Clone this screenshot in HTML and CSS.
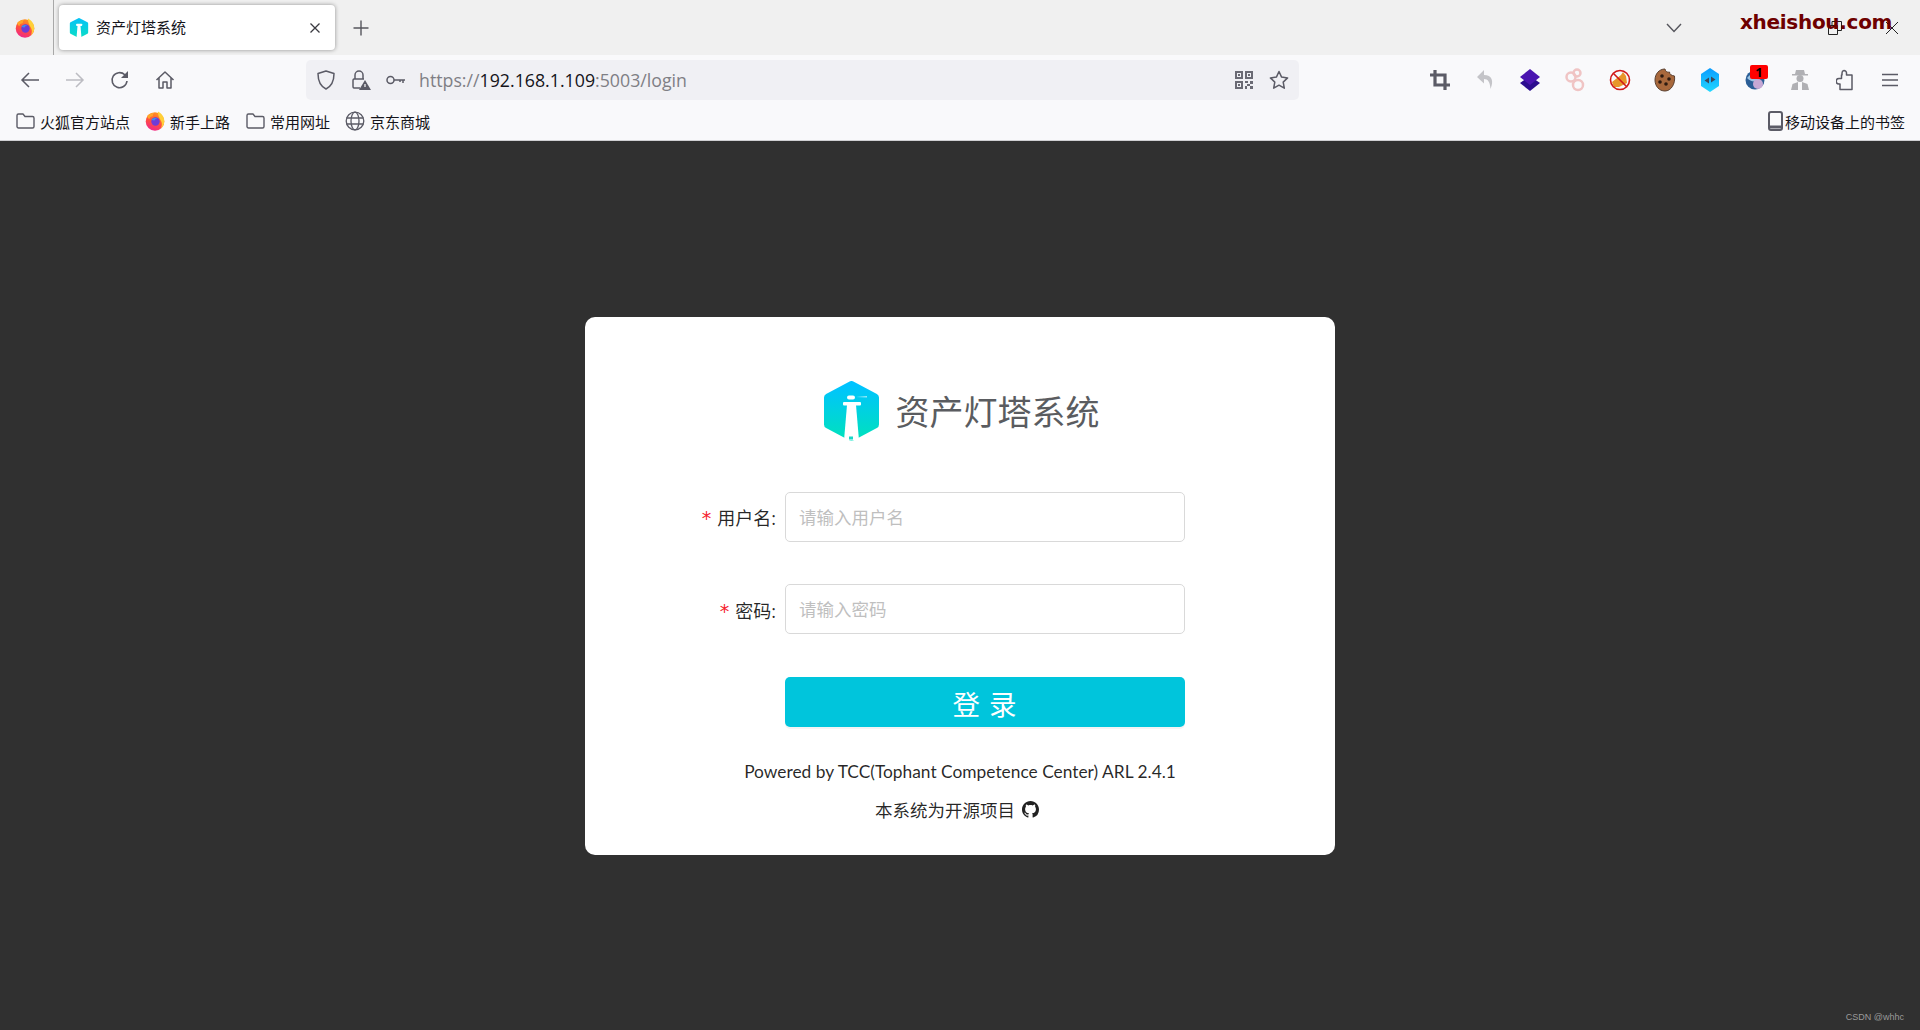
FILE: index.html
```html
<!DOCTYPE html>
<html lang="zh-CN">
<head>
    <meta charset="UTF-8">
    <title>资产灯塔系统</title>
    <link rel="stylesheet" href="styles.css">
</head>
<body>
    <div class="tabbar">
        <div class="tabbar-logo">
            <svg width="20" height="20" viewBox="0 0 20 20"><defs><linearGradient id="fx1" x1="0.7" y1="0" x2="0.3" y2="1"><stop offset="0" stop-color="#ff9a1f"/><stop offset="0.55" stop-color="#ff4f3e"/><stop offset="1" stop-color="#f0248f"/></linearGradient></defs><circle cx="10" cy="10.500" r="9.300" fill="url(#fx1)"/><path d="M13 .5c3 1.500 6.500 5 6.300 10-.1 3-1.500 5.500-3.500 7 1.500-3 1.500-6-.3-8.500C14.500 7 13 5 13 .5z" fill="#ffcf38"/><path d="M2 5c2-2.500 5-3.500 7-3-1 1-1.500 2-1 3-2 .5-3.500 1-3.500 3-1 0-2-1.500-2.500-3z" fill="#ffa52a"/><circle cx="10.500" cy="10.500" r="4.200" fill="#6f3bd6"/><path d="M6.500 8.500c2-2 4.500-2 6.500-.5-2-.5-3 .5-3.500 1.500-1 0-2-.2-3-1z" fill="#3a8df0"/></svg>
        </div>
        <div class="tab">
            <svg class="tab-icon" width="20" height="20" viewBox="0 0 55 60"><defs><linearGradient id="hex1" x1="0" y1="0" x2="0" y2="1"><stop offset="0" stop-color="#06c4f5"/><stop offset="1" stop-color="#0bdcc8"/></linearGradient></defs><path d="M27.500 4 51 16.500v27L27.500 56 4 43.500v-27z" fill="url(#hex1)" stroke="url(#hex1)" stroke-width="8" stroke-linejoin="round"/><path d="M23 24h9l3 36H20z" fill="#fff"/><rect x="19" y="17" width="18" height="7" rx="2" fill="#fff"/></svg>
            <span class="tab-title">资产灯塔系统</span>
            <svg class="tab-close" width="12" height="12" viewBox="0 0 12 12"><path d="M1.500 1.500l9 9M10.500 1.500l-9 9" stroke="#3a3a40" stroke-width="1.300"/></svg>
        </div>
        <svg class="tab-new" width="16" height="16" viewBox="0 0 16 16"><path d="M8 .5v15M.5 8h15" stroke="#55555c" stroke-width="1.400"/></svg>
        <svg class="tab-list" width="16" height="10" viewBox="0 0 16 10"><path d="M1 1l7 7.500L15 1" fill="none" stroke="#55555c" stroke-width="1.400"/></svg>
        <div class="winbtns">
            <svg width="14" height="14" viewBox="0 0 14 14"><path d="M1 7h12" stroke="#222" stroke-width="1"/></svg>
            <svg width="14" height="14" viewBox="0 0 14 14"><path d="M.5 4.500h9v9h-9zM4 4.500V.5h9.500v9H9.500" fill="none" stroke="#222"/></svg>
            <svg width="14" height="14" viewBox="0 0 14 14"><path d="M1 1l12 12M13 1L1 13" stroke="#222" stroke-width="1"/></svg>
        </div>
        <div class="watermark">xheishou.com</div>
    </div>

    <div class="toolbar">
        <div class="tool"><svg width="20" height="18" viewBox="0 0 20 18"><path d="M19 9H2M9 2 2 9l7 7" fill="none" stroke="#5b5b66" stroke-width="1.500"/></svg></div>
        <div class="tool"><svg width="20" height="18" viewBox="0 0 20 18"><path d="M1 9h17M11 2l7 7-7 7" fill="none" stroke="#bcbcc2" stroke-width="1.500"/></svg></div>
        <div class="tool"><svg width="20" height="20" viewBox="0 0 20 20"><path d="M17 11a7.500 7.500 0 1 1-2.200-6.200L17 7" fill="none" stroke="#5b5b66" stroke-width="1.600"/><path d="M18 1v7h-7z" fill="#5b5b66"/></svg></div>
        <div class="tool"><svg width="20" height="20" viewBox="0 0 20 20"><path d="M1.500 10 10 2l8.500 8M4 8v10h4v-6h4v6h4V8" fill="none" stroke="#5b5b66" stroke-width="1.500" stroke-linejoin="round"/></svg></div>

        <div class="urlbar">
            <svg class="url-shield" width="18" height="20" viewBox="0 0 18 20"><path d="M9 1 1 3.500c0 8 2 12.500 8 15.500 6-3 8-7.500 8-15.500z" fill="none" stroke="#5b5b66" stroke-width="1.500" stroke-linejoin="round"/></svg>
            <svg class="url-lock" width="20" height="20" viewBox="0 0 20 20"><path d="M4 9V5a4 4 0 0 1 8 0v4M9 18H3a1.500 1.500 0 0 1-1-1.500v-6A1.500 1.500 0 0 1 3 9h10" fill="none" stroke="#5b5b66" stroke-width="1.500"/><path d="M14 10l6 10H8z" fill="#5b5b66"/><path d="M14 14v3" stroke="#fff" stroke-width="1.200"/></svg>
            <svg class="url-key" width="20" height="10" viewBox="0 0 20 10"><circle cx="4.500" cy="5" r="3.500" fill="none" stroke="#5b5b66" stroke-width="1.500"/><path d="M8 5h11M17 5v3M14 5v2" fill="none" stroke="#5b5b66" stroke-width="1.500"/></svg>
            <span class="url-text">https://<b>192.168.1.109</b>:5003/login</span>
            <svg class="url-qr" width="18" height="18" viewBox="0 0 18 18" fill="#6a6a74"><path d="M0 0h8v8H0zm2 2v4h4V2zM10 0h8v8h-8zm2 2v4h4V2zM0 10h8v8H0zm2 2v4h4v-4zM3 3h2v2H3zM13 3h2v2h-2zM3 13h2v2H3zM10 10h3v2h-3zM15 10h3v3h-3zM12 13h3v2h-3zM10 15h2v3h-2zM15 15h3v3h-3z"/></svg>
            <svg class="url-star" width="20" height="20" viewBox="0 0 20 20"><path d="M10 1.500l2.600 5.600 6 .8-4.400 4.200 1.100 6.100L10 15.200l-5.300 3 1.100-6.100L1.400 7.900l6-.8z" fill="none" stroke="#5b5b66" stroke-width="1.500" stroke-linejoin="round"/></svg>
        </div>

        <div class="addons">
            <div class="tool"><svg width="20" height="20" viewBox="0 0 20 20"><path d="M5 0v15h15M0 5h15v15" fill="none" stroke="#5b5b66" stroke-width="3.200"/></svg></div>
            <div class="tool"><svg width="18" height="22" viewBox="0 0 18 22"><path d="M8 1 1 8l7 6.500V10c4 0 6 3 6.500 10C18 12 16 6 8 6z" fill="#c4c4c8"/></svg></div>
            <div class="tool"><svg width="20" height="22" viewBox="0 0 20 22"><path d="M10 7 20 14l-10 8L0 14z" fill="#2c0d8f"/><path d="M10 0 20 8l-10 8L0 8z" fill="#4a14b0"/></svg></div>
            <div class="tool"><svg width="20" height="24" viewBox="0 0 20 24" fill="none" stroke="#f0c4c4" stroke-width="2.500"><circle cx="6" cy="9" r="4.500"/><circle cx="12" cy="5" r="3.500"/><circle cx="13" cy="17" r="5"/></svg></div>
            <div class="tool"><svg width="22" height="22" viewBox="0 0 22 22"><path d="M3 13l9-7 2-3 3 4 1 7-8 4H5z" fill="#e8962a"/><circle cx="11" cy="11" r="9.500" fill="none" stroke="#d01818" stroke-width="1.600"/><path d="M4.500 4.500l13 13" stroke="#d01818" stroke-width="1.600"/></svg></div>
            <div class="tool"><svg width="22" height="24" viewBox="0 0 22 24"><path d="M11 1c.5 3 3 3.500 4.500 3 0 2.500 2 3.500 5 4 1 8-3.500 15-9.500 15C5 23 1 18 1 12S5 1 11 1z" fill="#a8683c" stroke="#5a4030" stroke-width="1"/><g fill="#2d1a10"><circle cx="8" cy="8" r="1.800"/><circle cx="15" cy="11" r="1.800"/><circle cx="6" cy="14" r="1.800"/><circle cx="12" cy="16" r="1.800"/></g></svg></div>
            <div class="tool"><svg width="18" height="24" viewBox="0 0 18 24"><defs><linearGradient id="hexa" x1="0" y1="0" x2="0" y2="1"><stop offset="0" stop-color="#0a9cff"/><stop offset="1" stop-color="#22d8ff"/></linearGradient></defs><path d="M9 0l9 6v12l-9 6-9-6V6z" fill="url(#hexa)"/><path d="M3.500 12.500l4.500-3v6zM14.500 11.500l-4.500-3v6z" fill="#3c4a5c"/></svg></div>
            <div class="tool tool-badged">
                <svg width="20" height="22" viewBox="0 0 20 22"><circle cx="10" cy="11" r="9.500" fill="#2b5e96"/><path d="M2 9c3-4 8-6 13-5l-3 8c-4 1-7 0-10-3z" fill="#9cc4e4"/><circle cx="13" cy="15" r="5" fill="#c6a8d4"/></svg>
                <span class="badge">1</span>
            </div>
            <div class="tool"><svg width="20" height="22" viewBox="0 0 20 22" fill="#b0b0b4"><path d="M6 1h8l1 4h3v1.500H2V5h3z"/><circle cx="10" cy="9.500" r="3.500"/><path d="M1 21l1.500-6L8 13v8zM19 21l-1.500-6L12 13v8z"/></svg></div>
            <div class="tool"><svg width="18" height="22" viewBox="0 0 18 22"><path d="M8 1.500a2.500 2.500 0 0 1 2.500 2.500v2h5.500v14.500H4V15H3a2.800 2.800 0 0 1 0-5.600h2.500V6h.500V4A2.500 2.500 0 0 1 8 1.500z" fill="none" stroke="#5b5b66" stroke-width="1.500" stroke-linejoin="round"/></svg></div>
            <div class="tool"><svg width="16" height="14" viewBox="0 0 16 14"><path d="M0 1.500h16M0 7h16M0 12.500h16" stroke="#5b5b66" stroke-width="1.500"/></svg></div>
        </div>
    </div>

    <div class="bookmarks">
        <div class="bookmark">
            <svg width="19" height="16" viewBox="0 0 19 16"><path d="M1 13.500V2.500A1.500 1.500 0 0 1 2.500 1H7l2 2.500h7.500A1.500 1.500 0 0 1 18 5v8.500a1.500 1.500 0 0 1-1.500 1.500h-14A1.500 1.500 0 0 1 1 13.500z" fill="none" stroke="#5b5b66" stroke-width="1.400" stroke-linejoin="round"/></svg>
            <span>火狐官方站点</span>
        </div>
        <div class="bookmark">
            <svg width="20" height="20" viewBox="0 0 20 20"><defs><linearGradient id="fx2" x1="0.7" y1="0" x2="0.3" y2="1"><stop offset="0" stop-color="#ff9a1f"/><stop offset="0.55" stop-color="#ff4f3e"/><stop offset="1" stop-color="#f0248f"/></linearGradient></defs><circle cx="10" cy="10.500" r="9.300" fill="url(#fx2)"/><path d="M13 .5c3 1.500 6.500 5 6.300 10-.1 3-1.500 5.500-3.500 7 1.500-3 1.500-6-.3-8.500C14.500 7 13 5 13 .5z" fill="#ffcf38"/><path d="M2 5c2-2.500 5-3.500 7-3-1 1-1.500 2-1 3-2 .5-3.500 1-3.500 3-1 0-2-1.500-2.500-3z" fill="#ffa52a"/><circle cx="10.500" cy="10.500" r="4.200" fill="#6f3bd6"/><path d="M6.500 8.500c2-2 4.500-2 6.500-.5-2-.5-3 .5-3.500 1.500-1 0-2-.2-3-1z" fill="#3a8df0"/></svg>
            <span>新手上路</span>
        </div>
        <div class="bookmark bookmark-folder">
            <svg width="19" height="16" viewBox="0 0 19 16"><path d="M1 13.500V2.500A1.500 1.500 0 0 1 2.500 1H7l2 2.500h7.500A1.500 1.500 0 0 1 18 5v8.500a1.500 1.500 0 0 1-1.500 1.500h-14A1.500 1.500 0 0 1 1 13.500z" fill="none" stroke="#5b5b66" stroke-width="1.400" stroke-linejoin="round"/></svg>
            <span>常用网址</span>
        </div>
        <div class="bookmark">
            <svg width="20" height="20" viewBox="0 0 20 20" fill="none" stroke="#5b5b66" stroke-width="1.300"><circle cx="10" cy="10" r="8.800"/><ellipse cx="10" cy="10" rx="4" ry="8.800"/><path d="M1.500 7h17M1.500 13h17"/></svg>
            <span>京东商城</span>
        </div>
        <div class="bookmark bookmark-mobile">
            <svg width="15" height="20" viewBox="0 0 15 20"><rect x="1" y="1" width="13" height="18" rx="2" fill="none" stroke="#5b5b66" stroke-width="2"/><path d="M1 16h13" stroke="#5b5b66" stroke-width="3"/></svg>
            <span>移动设备上的书签</span>
        </div>
    </div>

    <div class="page">
        <div class="card">
            <div class="brand">
                <svg class="brand-logo" width="55" height="60" viewBox="0 0 55 60">
                    <defs><linearGradient id="hex" x1="0" y1="0" x2="0" y2="1"><stop offset="0" stop-color="#00c3ff"/><stop offset="1" stop-color="#00e0c0"/></linearGradient></defs>
                    <path d="M27.500 4 51 16.500v27L27.500 56 4 43.500v-27z" fill="url(#hex)" stroke="url(#hex)" stroke-width="8" stroke-linejoin="round"/>
                    <path d="M23 24h9l3 35.500H20z" fill="#fff"/>
                    <rect x="19" y="21" width="18" height="3.500" rx="1" fill="#fff"/>
                    <rect x="23" y="14.500" width="8" height="4" rx="2" fill="#fff"/>
                    <path d="M32 16l11-1v1.500z" fill="#fff" opacity="0.6"/>
                    <rect x="25" y="55.500" width="4" height="3" fill="#18d8c8"/>
                </svg>
                <span class="brand-name">资产灯塔系统</span>
            </div>
            <form class="login">
                <div class="field">
                    <label class="field-label">用户名:</label>
                    <input class="field-input" type="text" placeholder="请输入用户名">
                </div>
                <div class="field">
                    <label class="field-label">密码:</label>
                    <input class="field-input" type="password" placeholder="请输入密码">
                </div>
                <div class="field field-submit">
                    <button class="submit" type="button">登 录</button>
                </div>
            </form>
            <div class="powered">Powered by TCC(Tophant Competence Center) ARL 2.4.1</div>
            <div class="opensource">
                <span>本系统为开源项目</span>
                <svg width="17" height="17" viewBox="0 0 16 16"><path fill="#222" d="M8 0C3.580 0 0 3.580 0 8c0 3.540 2.290 6.530 5.470 7.590.4.070.55-.17.55-.38 0-.19-.01-.82-.01-1.490-2.010.37-2.530-.49-2.690-.94-.09-.23-.48-.94-.82-1.130-.28-.15-.68-.52-.01-.53.63-.01 1.080.58 1.230.82.720 1.210 1.870.87 2.330.66.070-.52.280-.87.510-1.070-1.780-.2-3.640-.89-3.640-3.950 0-.87.310-1.590.820-2.150-.08-.2-.36-1.020.08-2.120 0 0 .67-.21 2.200.82.640-.18 1.320-.27 2-.27s1.360.09 2 .27c1.530-1.040 2.200-.82 2.200-.82.440 1.100.16 1.920.08 2.120.51.560.82 1.270.82 2.150 0 3.070-1.870 3.750-3.650 3.950.29.250.54.730.54 1.480 0 1.070-.01 1.930-.01 2.200 0 .21.150.460.550.38A8.010 8.010 0 0 0 16 8c0-4.420-3.580-8-8-8z"/></svg>
            </div>
        </div>
        <div class="credit">CSDN @whhc</div>
    </div>
</body>
</html>
```

FILE: styles.css
```css
*{
    margin: 0;
    padding: 0;
    box-sizing: border-box;
}

html, body{
    height: 100%;
    overflow: hidden;
}

body{
    display: flex;
    flex-direction: column;
    background-color: #303030;
    font-family: "Open Sans", "Noto Sans CJK SC", sans-serif;
    color: #15141a;
}

/* tab strip */
.tabbar{
    position: relative;
    display: flex;
    align-items: center;
    height: 55px;
    flex-shrink: 0;
    background-color: #f0f0f0;
}

.tabbar-logo{
    display: flex;
    align-items: center;
    width: 54px;
    height: 55px;
    padding-left: 15px;
    border-right: 1px solid #a8a8a8;
}

.tab{
    display: flex;
    align-items: center;
    width: 276px;
    height: 45px;
    margin-left: 5px;
    padding: 0 14px 0 10px;
    background-color: white;
    border-radius: 4px;
    box-shadow: 0 0 4px rgba(0, 0, 0, 0.4);
}

.tab-title{
    margin-left: 7px;
    margin-bottom: 2px;
    font-size: 15px;
}

.tab-close{
    margin-left: auto;
}

.tab-new{
    margin-left: 18px;
}

.tab-list{
    margin-left: auto;
    margin-right: 89px;
}

.winbtns{
    display: flex;
    justify-content: space-between;
    width: 128px;
    margin-right: 21px;
}

.watermark{
    position: absolute;
    left: 1740px;
    top: 10px;
    font-family: "DejaVu Sans", sans-serif;
    font-size: 20px;
    font-weight: 700;
    letter-spacing: -0.3px;
    color: #6e0000;
}

/* nav toolbar */
.toolbar{
    display: flex;
    align-items: center;
    height: 50px;
    flex-shrink: 0;
    padding: 0 8px 0 7px;
    background-color: #f9f9fb;
}

.tool{
    position: relative;
    display: flex;
    justify-content: center;
    align-items: center;
    width: 45px;
    height: 40px;
}

.urlbar{
    display: flex;
    align-items: center;
    width: 993px;
    height: 40px;
    margin-left: 119px;
    padding: 0 10px 0 11px;
    background-color: #f0f0f4;
    border-radius: 5px;
}

.url-lock{
    margin-left: 16px;
}

.url-key{
    margin-left: 15px;
}

.url-text{
    margin-left: 13px;
    font-size: 17.75px;
    color: #7f7f85;
}

.url-text b{
    font-weight: 400;
    color: #15141a;
}

.url-qr{
    margin-left: auto;
}

.url-star{
    margin-left: 16px;
}

.addons{
    display: flex;
    margin-left: auto;
}

.badge{
    position: absolute;
    left: 18px;
    top: 5px;
    width: 18px;
    height: 14px;
    background-color: #ff0000;
    border-radius: 2px;
    font-size: 13px;
    font-weight: 700;
    line-height: 14px;
    text-align: center;
    color: #000;
}

/* bookmarks */
.bookmarks{
    display: flex;
    align-items: center;
    height: 36px;
    flex-shrink: 0;
    padding: 0 15px 3px 16px;
    background-color: #f9f9fb;
    border-bottom: 1px solid #cfcfd2;
    font-size: 15px;
}

.bookmark{
    display: flex;
    align-items: center;
    gap: 5px;
    margin-right: 15px;
}

.bookmark-folder{
    margin-left: 1px;
}

.bookmark-mobile{
    margin-left: auto;
    margin-right: 0;
    gap: 2px;
}

/* login page */
.page{
    position: relative;
    flex: 1;
    display: flex;
    justify-content: center;
    align-items: center;
    background-color: #303030;
}

.card{
    display: flex;
    flex-direction: column;
    align-items: center;
    width: 750px;
    height: 538px;
    padding-top: 64px;
    background-color: white;
    border-radius: 10px;
}

.brand{
    display: flex;
    align-items: center;
    gap: 17px;
    height: 60px;
    margin-left: 3px;
}

.brand-name{
    font-size: 34px;
    color: #5a5c60;
}

.login{
    width: 100%;
    margin-top: 51px;
}

.field{
    display: flex;
    align-items: center;
    height: 50px;
    margin-bottom: 42.5px;
}

.field-label{
    width: 200px;
    padding: 1px 9px 0 0;
    font-size: 18px;
    text-align: right;
    color: rgba(0, 0, 0, 0.85);
}

.field-label::before{
    content: "*";
    margin-right: 6px;
    font-family: "DejaVu Sans", sans-serif;
    font-size: 19px;
    color: #f5222d;
}

.field-input{
    width: 400px;
    height: 50px;
    padding: 0 13px;
    background-color: white;
    border: 1px solid #d9d9d9;
    border-radius: 5px;
    outline: none;
    font-family: inherit;
    font-size: 17.5px;
}

.field-input::placeholder{
    color: #bfbfbf;
}

.field-submit{
    margin-bottom: 0;
    padding-left: 200px;
}

.submit{
    width: 400px;
    height: 50px;
    padding-top: 3px;
    background-color: #00c5dc;
    border: none;
    border-radius: 5px;
    box-shadow: 0 2px 0 rgba(0, 0, 0, 0.045);
    font-family: inherit;
    font-size: 27.5px;
    letter-spacing: 1px;
    color: white;
}

.powered{
    margin-top: 32px;
    font-family: "Lato", "Noto Sans CJK SC", sans-serif;
    font-size: 17.35px;
    line-height: 26px;
    color: rgba(0, 0, 0, 0.85);
}

.opensource{
    display: flex;
    align-items: center;
    gap: 7px;
    margin-top: 12px;
    margin-left: -6px;
    font-size: 17.5px;
    line-height: 26px;
    color: rgba(0, 0, 0, 0.85);
}

.credit{
    position: absolute;
    right: 16px;
    bottom: 8px;
    font-family: "Liberation Sans", sans-serif;
    font-size: 9px;
    color: #9a9a9a;
}
```
